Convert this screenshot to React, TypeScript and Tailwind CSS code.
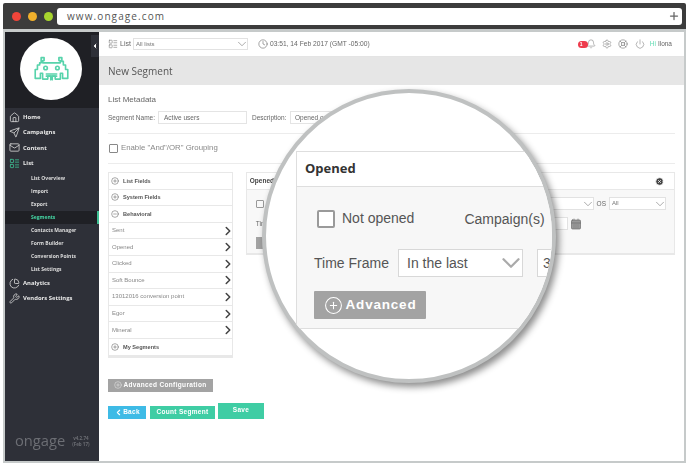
import React from 'react';
import { Home, Send, Mail, LayoutList, PieChart, Wrench, ChevronRight, ChevronDown, ChevronLeft, CirclePlus, CircleMinus, Plus, Clock, Bell, Settings, LifeBuoy, Power, CircleX, CalendarDays } from 'lucide-react';

const Invader = () => (
  <svg viewBox="0 0 50 36" className="w-[37px] h-[27px]" fill="none" stroke="#57d3ab" strokeWidth="2.2" strokeLinejoin="round" strokeLinecap="round">
    <path d="M11 2h4v4h-2v3h24v-3h-2v-4h4v5h2v5h3v6h3v12h-7v-7h-3v8h-7v-4h-10v4h-7v-8h-3v7h-7v-12h3v-6h3v-3h2z" />
    <circle cx="17" cy="16" r="2.4" />
    <circle cx="33" cy="16" r="2.4" />
    <path d="M18 27h6v5M32 27h-6v5M18 24h14" />
  </svg>
);

const subItems = ['List Overview', 'Import', 'Export', 'Segments', 'Contacts Manager', 'Form Builder', 'Conversion Points', 'List Settings'];
const fieldRows = ['Sent', 'Opened', 'Clicked', 'Soft Bounce', '13012016 conversion point', 'Egor', 'Mineral'];

const NavItem = ({ icon: Icon, label, active }: { icon: React.ElementType; label: string; active?: boolean }) => (
  <div className="h-[15.2px] flex items-center pl-[4px] gap-[3px] text-[#e8e8e8] text-[5.9px] font-bold">
    <Icon className={active ? 'w-[11px] h-[11px] text-[#3fbf93]' : 'w-[11px] h-[11px] text-[#d5d5d5]'} strokeWidth={1.8} />
    <span>{label}</span>
  </div>
);

const GroupRow = ({ minus, label }: { minus?: boolean; label: string }) => (
  <div className="h-[16.6px] flex items-center gap-[4px] pl-[2px] border-b border-[#e8e8e8] text-[5.6px] font-bold text-[#555]">
    {minus ? <CircleMinus className="w-[8px] h-[8px] text-[#555]" strokeWidth={1.5} /> : <CirclePlus className="w-[8px] h-[8px] text-[#555]" strokeWidth={1.5} />}
    <span>{label}</span>
  </div>
);

const FakeSelect = ({ className, label }: { className: string; label?: string }) => (
  <div className={`flex items-center justify-between bg-white border border-[#e2e2e2] ${className}`}>
    <span className="pl-[2px] text-[6px] text-[#777]">{label}</span>
    <ChevronDown className="w-[14px] h-[14px] -my-[2px] -mr-[2px] text-[#888]" strokeWidth={1.2} />
  </div>
);

export default function App() {
  return (
    <div className="relative w-[689px] h-[468px] bg-white overflow-hidden font-['Liberation_Sans',sans-serif]">
      {/* browser chrome */}
      <div className="mx-[3px] mt-[3px] h-[26px] bg-[#3c3c3c] rounded-t-[2px] flex items-center">
        <div className="w-[54px] pl-[9px] flex gap-[7px] shrink-0">
          <span className="w-[9px] h-[9px] rounded-full bg-[#f0453a]" />
          <span className="w-[9px] h-[9px] rounded-full bg-[#f0b02c]" />
          <span className="w-[9px] h-[9px] rounded-full bg-[#a8d52e]" />
        </div>
        <div className="flex-1 mr-[4px] h-[17px] bg-white rounded-[3px] flex items-center justify-between pl-[10px] pr-[2px]">
          <span className="text-[10px] tracking-[1.1px] text-[#555] font-['Open_Sans',sans-serif]">www.ongage.com</span>
          <Plus className="w-[12px] h-[12px] text-[#666]" strokeWidth={2.5} />
        </div>
      </div>

      {/* app */}
      <div className="mx-[3px] h-[434px] border-x-[2px] border-b-[2px] border-t-[3px] border-[#c6caca] flex blur-[0.3px]">
        {/* sidebar */}
        <div className="relative w-[94px] shrink-0 bg-[#2e3038] flex flex-col font-['Open_Sans',sans-serif]">
          <div className="h-[76px] bg-[#1f2025] flex pt-[6px] pl-[15px]">
            <div className="w-[62px] h-[62px] rounded-full bg-white flex items-center justify-center">
              <Invader />
            </div>
          </div>
          <div className="absolute right-0 top-[3px] w-[8px] h-[22px] bg-[#2e3038] flex items-center justify-center">
            <ChevronLeft className="w-[8px] h-[8px] text-white fill-white" />
          </div>
          <div className="pt-[2px]">
            <NavItem icon={Home} label="Home" />
            <NavItem icon={Send} label="Campaigns" />
            <NavItem icon={Mail} label="Content" />
            <NavItem icon={LayoutList} label="List" active />
          </div>
          <div className="pt-[1px]">
            {subItems.map((s) => (
              <div key={s} className={s === 'Segments' ? 'h-[13px] pl-[26px] flex items-center text-[5px] font-bold text-[#45d6a4] bg-[#1f2025] border-r-[2px] border-[#3fbf93]' : 'h-[13px] pl-[26px] flex items-center text-[5px] font-bold text-[#dcdcdc]'}>
                {s}
              </div>
            ))}
          </div>
          <NavItem icon={PieChart} label="Analytics" />
          <NavItem icon={Wrench} label="Vendors Settings" />
          <div className="mt-auto mb-[13px] pl-[10px] flex items-center gap-[7px] text-[#6c6e74]">
            <span className="text-[14.7px] leading-none font-['Open_Sans',sans-serif]">ongage</span>
            <span className="text-[4.5px] leading-[6px] text-center font-bold">v4.2.74<br />(Feb 17)</span>
          </div>
        </div>

        {/* main */}
        <div className="flex-1 flex flex-col bg-white min-w-0">
          <div className="h-[25px] border-b border-[#e4e4e4] flex items-center pl-[9px] pr-[12px] text-[#666]">
            <LayoutList className="w-[10px] h-[10px] text-[#777] mr-[2px]" strokeWidth={1.4} />
            <span className="text-[7px] mr-[2px]">List</span>
            <FakeSelect className="w-[115px] h-[12px]" label="All lists" />
            <Clock className="w-[10px] h-[10px] ml-[10px] mr-[2px] text-[#666]" strokeWidth={1.4} />
            <span className="text-[6.7px]">03:51, 14 Feb 2017 (GMT -05:00)</span>
            <div className="ml-auto flex items-center">
              <span className="relative z-0 w-[10px] h-[7px] rounded-full bg-[#ee3b4c] text-white text-[5px] font-bold leading-[7px] pl-[2px]">1</span>
              <Bell className="w-[10px] h-[10px] -ml-[2px] mr-[6px] text-[#777]" strokeWidth={1.3} />
              <Settings className="w-[10px] h-[10px] mr-[6px] text-[#777]" strokeWidth={1.3} />
              <LifeBuoy className="w-[10px] h-[10px] mr-[7px] text-[#777]" strokeWidth={1.5} />
              <Power className="w-[10px] h-[10px] mr-[5px] text-[#777]" strokeWidth={1.3} />
              <span className="text-[6.5px] text-[#62dcb4]">Hi</span>
              <span className="text-[6.5px] text-[#666] ml-[2px]">Ilona</span>
            </div>
          </div>
          <div className="h-[28px] bg-[#e6e6e6] flex items-center pl-[9px] text-[10px] text-[#555] font-['Open_Sans',sans-serif]">New Segment</div>

          <div className="pl-[9px] pr-[9px] flex-1 flex flex-col">
            <div className="mt-[9px] text-[8px] text-[#666]">List Metadata</div>
            <div className="mt-[5px] h-[13px] flex items-center text-[6.5px] text-[#666]">
              <span className="w-[50px]">Segment Name:</span>
              <div className="w-[89px] h-[13px] border border-[#e4e4e4] pl-[5px] flex items-center">Active users</div>
              <span className="ml-[5px] w-[38px]">Description:</span>
              <div className="w-[100px] h-[13px] border border-[#e4e4e4] pl-[4px] flex items-center">Opened or</div>
            </div>
            <div className="mt-[9px] border-t border-[#ececec]" />
            <div className="mt-[9px] h-[10px] flex items-center gap-[3px] text-[7.8px] text-[#888] pl-[1px]">
              <span className="w-[9px] h-[9px] border border-[#888] rounded-[1px]" />
              <span>Enable "And"/OR" Grouping</span>
            </div>
            <div className="mt-[10px] border-t border-[#ececec]" />

            <div className="mt-[8px] flex items-start gap-[13px]">
              <div className="w-[125px] border border-[#e8e8e8] border-b-[2px]">
                <GroupRow label="List Fields" />
                <GroupRow label="System Fields" />
                <GroupRow minus label="Behavioral" />
                {fieldRows.map((r) => (
                  <div key={r} className="h-[16.6px] flex items-center justify-between pl-[3px] border-b border-[#e8e8e8] text-[6px] text-[#888]">
                    <span>{r}</span>
                    <ChevronRight className="w-[14px] h-[14px] -my-[3px] -mr-[3px] text-[#444]" strokeWidth={2.6} />
                  </div>
                ))}
                <GroupRow label="My Segments" />
              </div>

              <div className="w-[430px] border border-[#e8e8e8] border-b-[2px] bg-[#f8f8f8]">
                <div className="h-[17px] bg-white border-b border-[#e8e8e8] flex items-center justify-between pl-[3px] pr-[10px] text-[6.5px] font-bold text-[#444]">
                  <span>Opened</span>
                  <CircleX className="w-[9px] h-[9px] text-white fill-[#444]" strokeWidth={2} />
                </div>
                <div className="h-[63px] pl-[9px] pr-[8px] flex flex-col">
                  <div className="mt-[7px] h-[13px] flex items-center justify-end text-[6.5px] text-[#666]">
                    <span className="mr-auto w-[8px] h-[8px] border border-[#999] rounded-[1px]" />
                    <FakeSelect className="w-[50px] h-[13px]" />
                    <span className="mx-[3px]">OS</span>
                    <FakeSelect className="w-[57px] h-[13px]" label="All" />
                  </div>
                  <div className="mt-[7px] h-[13px] flex items-center justify-end pr-[84px]">
                    <span className="mr-auto text-[6.5px] text-[#666]">Time Frame</span>
                    <div className="w-[20px] h-[13px] bg-white border border-[#e2e2e2]" />
                    <CalendarDays className="w-[12px] h-[12px] ml-[2px] text-[#666] fill-[#999]" strokeWidth={1.3} />
                  </div>
                  <div className="mt-[7px] w-[37px] h-[12px] bg-[#a3a3a3]" />
                </div>
              </div>
            </div>

            <div className="mt-[21px] w-[105px] h-[13px] bg-[#a3a3a3] flex items-center justify-center gap-[1px] text-white text-[6.5px] font-bold tracking-[0.35px]">
              <CirclePlus className="w-[8px] h-[8px]" strokeWidth={1.2} />
              <span>Advanced Configuration</span>
            </div>
            <div className="mt-[11px] flex items-end text-white text-[6.5px] font-bold tracking-[0.3px]">
              <div className="w-[38px] h-[13px] bg-[#3ebbe6] flex items-center justify-center">
                <ChevronLeft className="w-[9px] h-[9px]" strokeWidth={3} />Back
              </div>
              <div className="ml-[4px] w-[65px] h-[13px] bg-[#3fcda4] flex items-center justify-center">Count Segment</div>
              <div className="ml-[3px] w-[46px] h-[16px] bg-[#3fcda4] flex items-center justify-center pb-[2px]">Save</div>
            </div>
          </div>
        </div>
      </div>

      {/* magnifier */}
      <div className="absolute left-[262px] top-[89px] w-[294px] h-[294px] rounded-full border-[4px] border-[#bfc1c1] bg-white overflow-hidden shadow-[3px_4px_7px_rgba(0,0,0,0.45)]">
        <div className="ml-[30px] mt-[58px] w-[300px] border border-[#dedede] bg-[#f7f7f7]">
          <div className="h-[35px] bg-white border-b border-[#dedede] pl-[8px] flex items-center text-[13px] font-bold text-[#333] font-['Open_Sans',sans-serif]">Opened</div>
          <div className="h-[141px] pl-[17px] flex flex-col text-[#555]">
            <div className="mt-[22px] h-[19px] flex items-center text-[14px]">
              <span className="w-[18px] h-[18px] ml-[3px] mr-[7px] bg-white border-[2px] border-[#9a9a9a] rounded-[2px]" />
              <span>Not opened</span>
              <span className="ml-[50px] mt-[2px]">Campaign(s)</span>
            </div>
            <div className="mt-[21px] h-[28px] flex items-center text-[14px]">
              <span className="w-[84px]">Time Frame</span>
              <div className="w-[125px] h-[28px] bg-white border border-[#d8d8d8] flex items-center justify-between pl-[8px]">
                <span>In the last</span>
                <ChevronDown className="w-[30px] h-[30px] -my-[2px] -mr-[4px] text-[#aaa]" strokeWidth={1.8} />
              </div>
              <div className="ml-[14px] w-[40px] h-[28px] bg-white border border-[#d8d8d8] pl-[5px] flex items-center">3</div>
            </div>
            <div className="mt-[14px] w-[112px] h-[28px] bg-[#a3a3a3] rounded-[1px] flex items-center justify-center gap-[3px] text-white text-[13.5px] font-bold tracking-[0.8px]">
              <CirclePlus className="w-[19px] h-[19px]" strokeWidth={1.3} />
              <span>Advanced</span>
            </div>
          </div>
        </div>
      </div>
    </div>
  );
}
